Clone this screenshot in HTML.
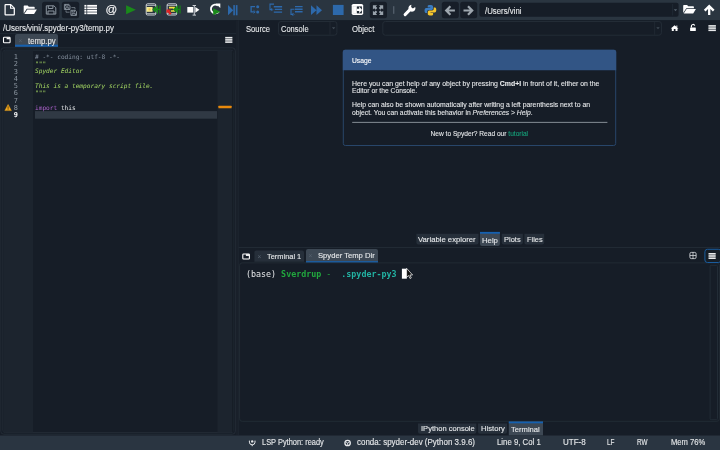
<!DOCTYPE html>
<html><head><meta charset="utf-8"><title>Spyder</title>
<style>
*{box-sizing:border-box;margin:0;padding:0}
html,body{width:720px;height:450px;overflow:hidden;background:#161d27}
body{position:relative;color:#e6e8ea}
.a{position:absolute}
.t{position:absolute;white-space:pre;line-height:1;transform-origin:0 50%}
.s{font-family:"Liberation Sans","DejaVu Sans",sans-serif;-webkit-text-stroke:0.12px}
.m{font-family:"DejaVu Sans Mono","Liberation Mono",monospace}
.cm{color:#8792a0}.ds{color:#a8dc64}.kw{color:#a960c8}
svg{position:absolute;left:0;top:0;overflow:visible}
</style></head><body>
<svg width="720" height="450" viewBox="0 0 720 450">
<rect x="0" y="0" width="720" height="20.1" fill="#2a3540"/>
<rect x="42" y="1.7" width="17.4" height="16.6" rx="2.5" fill="#171e28"/>
<rect x="61.8" y="1.7" width="17.4" height="16.6" rx="2.5" fill="#171e28"/>
<rect x="369.8" y="1.7" width="17.2" height="16.6" rx="2.5" fill="#171e28"/>
<rect x="441.8" y="1.7" width="17" height="16.6" rx="2.5" fill="#171e28"/>
<rect x="460.2" y="1.7" width="17" height="16.6" rx="2.5" fill="#171e28"/>
<rect x="479.4" y="2.8" width="199.2" height="14" rx="2" fill="#161d27"/>
<rect x="672.3" y="4" width="0.8" height="11.5" fill="#222c37"/>
<rect x="393.2" y="6.2" width="1.1" height="7.6" fill="#5b6774"/>
<rect x="235.8" y="20.1" width="2.8" height="415.2" fill="#19202a"/>
<rect x="238.2" y="20.1" width="0.8" height="415.2" fill="#1d252f"/>
<rect x="0" y="33.3" width="236" height="0.8" fill="#232d38"/>
<path d="M15 46.7V35.9q0 -2 2 -2H56q2 0 2 2V46.7z" fill="#3d4854"/>
<rect x="15" y="44.7" width="43" height="2" fill="#1560b0"/>
<rect x="0.8" y="47.8" width="234.5" height="386.4" rx="3" fill="none" stroke="#232c36" stroke-width="1"/>
<rect x="2.8" y="50.2" width="230.6" height="382.4" rx="2.5" fill="none" stroke="#232c36" stroke-width="1"/>
<rect x="3.3" y="50.7" width="29.7" height="381.4" fill="#1c242e"/>
<rect x="217.5" y="50.7" width="15.4" height="381.4" fill="#1c242e"/>
<rect x="35" y="111.1" width="182" height="7.6" fill="#303944"/>
<rect x="218.4" y="105.8" width="13.2" height="2.4" rx="0.5" fill="#e8890c"/>
<rect x="232.5" y="51" width="0.9" height="381" fill="#131921"/>
<rect x="278.5" y="21.5" width="58.4" height="13.7" rx="2.5" fill="none" stroke="#232c36" stroke-width="1"/>
<rect x="329.6" y="22" width="0.8" height="12.7" fill="#232c36"/>
<rect x="382.8" y="21.5" width="278.6" height="13.7" rx="2.5" fill="none" stroke="#232c36" stroke-width="1"/>
<rect x="654.3" y="22" width="0.8" height="12.7" fill="#232c36"/>
<rect x="343.3" y="50.3" width="272.4" height="95.2" rx="2" fill="#161d27" stroke="#28466a" stroke-width="1"/>
<path d="M342.8 70.3V51.8q0 -2 2 -2H614.2q2 0 2 2V70.3z" fill="#325585"/>
<rect x="352.2" y="121.9" width="255.2" height="0.8" fill="#a0a8b0"/>
<path d="M416.4 233.8V242.6q0 2 2 2H476.5q2 0 2 -2V233.8z" fill="#262f3a"/>
<path d="M480 231.9V243.9q0 2 2 2H497.9q2 0 2 -2V231.9z" fill="#3d4854"/>
<rect x="480" y="231.9" width="19.9" height="1.8" fill="#1560b0"/>
<path d="M501.8 233.8V242.6q0 2 2 2H520.8q2 0 2 -2V233.8z" fill="#262f3a"/>
<path d="M524.4 233.8V242.6q0 2 2 2H542.2q2 0 2 -2V233.8z" fill="#262f3a"/>
<rect x="238.6" y="247.05" width="482" height="0.9" fill="#232c36"/>
<path d="M254.4 261.7V252.5q0 -2 2 -2H302q2 0 2 2V261.7z" fill="#262f3a"/>
<path d="M306 262.8V251q0 -2 2 -2H376q2 0 2 2V262.8z" fill="#3d4854"/>
<rect x="306" y="261.2" width="72" height="1.6" fill="#1560b0"/>
<rect x="239.6" y="262.9" width="479.8" height="158.4" rx="2.5" fill="none" stroke="#232c36" stroke-width="0.9"/>
<rect x="401.9" y="268.7" width="4.9" height="10" fill="#ffffff"/>
<rect x="710.1" y="265.3" width="7.4" height="154.4" rx="1" fill="none" stroke="#222c36" stroke-width="1"/>
<path d="M418 423.5V431.7q0 2 2 2H474.3q2 0 2 -2V423.5z" fill="#262f3a"/>
<path d="M478 423.5V431.7q0 2 2 2H505q2 0 2 -2V423.5z" fill="#262f3a"/>
<rect x="508.8" y="421.5" width="34.2" height="14" fill="#3d4854"/>
<rect x="508.8" y="421.5" width="34.2" height="1.8" fill="#1560b0"/>
<rect x="0" y="435.5" width="720" height="14.5" fill="#2a3541"/>
</svg>
<div id="tx" style="position:absolute;left:0;top:0;width:720px;height:450px;will-change:transform">
<div class="t s" style="left:2.90px;top:23.95px;font-size:8.3px;transform:scaleX(0.9544);">/Users/vini/.spyder-py3/temp.py</div>
<div class="t s" style="left:18.50px;top:37.65px;font-size:6.5px;color:#56626e;-webkit-text-stroke:0">×</div>
<div class="t s" style="left:27.70px;top:36.65px;font-size:8.3px;transform:scaleX(0.9351);">temp.py</div>
<div class="t s" style="left:245.80px;top:24.85px;font-size:8.3px;transform:scaleX(0.9127);">Source</div>
<div class="t s" style="left:280.50px;top:24.85px;font-size:8.3px;transform:scaleX(0.9063);">Console</div>
<div class="t s" style="left:351.90px;top:24.85px;font-size:8.3px;transform:scaleX(0.9298);">Object</div>
<div class="t s" style="left:484.60px;top:6.65px;font-size:8.3px;transform:scaleX(0.9423);">/Users/vini</div>
<div class="t s" style="left:352.20px;top:56.65px;font-size:7.3px;transform:scaleX(0.9244);color:#fff">Usage</div>
<div class="t s" style="left:352.20px;top:80.90px;font-size:6.6px;transform:scaleX(1.0472);color:#e8eaec;-webkit-text-stroke:0.08px">Here you can get help of any object by pressing <b>Cmd+I</b> in front of it, either on the</div>
<div class="t s" style="left:352.20px;top:88.30px;font-size:6.6px;transform:scaleX(1.0222);color:#e8eaec;-webkit-text-stroke:0.08px">Editor or the Console.</div>
<div class="t s" style="left:352.20px;top:102.20px;font-size:6.6px;transform:scaleX(1.0394);color:#e8eaec;-webkit-text-stroke:0.08px">Help can also be shown automatically after writing a left parenthesis next to an</div>
<div class="t s" style="left:352.20px;top:109.60px;font-size:6.6px;transform:scaleX(1.0279);color:#e8eaec;-webkit-text-stroke:0.08px">object. You can activate this behavior in <i>Preferences &gt; Help</i>.</div>
<div class="t s" style="left:430.60px;top:130.70px;font-size:6.6px;color:#e8eaec;-webkit-text-stroke:0.08px">New to Spyder? Read our <span style="color:#16a37b">tutorial</span></div>
<div class="t s" style="left:418.40px;top:235.95px;font-size:8.1px;transform:scaleX(0.9522);">Variable explorer</div>
<div class="t s" style="left:482.00px;top:237.15px;font-size:8.1px;transform:scaleX(0.9546);">Help</div>
<div class="t s" style="left:503.80px;top:235.95px;font-size:8.1px;transform:scaleX(0.9278);">Plots</div>
<div class="t s" style="left:526.70px;top:235.95px;font-size:8.1px;transform:scaleX(0.9126);">Files</div>
<div class="t s" style="left:257.40px;top:253.85px;font-size:6.5px;color:#56626e;-webkit-text-stroke:0">×</div>
<div class="t s" style="left:267.25px;top:252.75px;font-size:8.1px;transform:scaleX(0.9172);">Terminal 1</div>
<div class="t s" style="left:308.40px;top:253.25px;font-size:6.5px;color:#56626e;-webkit-text-stroke:0">×</div>
<div class="t s" style="left:318.00px;top:252.15px;font-size:8.1px;transform:scaleX(0.9436);">Spyder Temp Dir</div>
<div class="t m" style="left:246.00px;top:269.65px;font-size:8.3px;transform:scaleX(1.0041);">(base) <b style="color:#21a83e">Sverdrup</b> <span style="color:#21a83e">-</span>  <b style="color:#22b3a3">.spyder-py3</b></div>
<div class="t s" style="left:420.50px;top:425.15px;font-size:8.1px;transform:scaleX(0.9333);">IPython console</div>
<div class="t s" style="left:480.75px;top:425.15px;font-size:8.1px;transform:scaleX(0.9429);">History</div>
<div class="t s" style="left:511.25px;top:426.35px;font-size:8.1px;transform:scaleX(0.9397);">Terminal</div>
<div class="t s" style="left:262.00px;top:439.40px;font-size:8.2px;transform:scaleX(0.9064);">LSP Python: ready</div>
<div class="t s" style="left:357.00px;top:439.40px;font-size:8.2px;transform:scaleX(0.9747);">conda: spyder-dev (Python 3.9.6)</div>
<div class="t s" style="left:497.00px;top:439.40px;font-size:8.2px;transform:scaleX(0.9514);">Line 9, Col 1</div>
<div class="t s" style="left:563.00px;top:439.40px;font-size:8.2px;transform:scaleX(0.9805);">UTF-8</div>
<div class="t s" style="left:607.00px;top:439.40px;font-size:8.2px;transform:scaleX(0.7843);">LF</div>
<div class="t s" style="left:637.00px;top:439.40px;font-size:8.2px;transform:scaleX(0.7778);">RW</div>
<div class="t s" style="left:671.25px;top:439.40px;font-size:8.2px;transform:scaleX(0.9292);">Mem 76%</div>
<div class="t s" style="left:105.61px;top:3.30px;font-size:11.6px;color:#ffffff">@</div>
<div class="t m" style="left:13.67px;top:54.15px;font-size:6.9px;color:#8c96a1">1</div>
<div class="t m" style="left:35.00px;top:53.82px;font-size:6.15px;"><span class="cm">#&nbsp;-*-&nbsp;coding:&nbsp;utf-8&nbsp;-*-</span></div>
<div class="t m" style="left:13.67px;top:61.40px;font-size:6.9px;color:#8c96a1">2</div>
<div class="t m" style="left:35.00px;top:61.08px;font-size:6.15px;"><span class="ds">"""</span></div>
<div class="t m" style="left:13.67px;top:68.65px;font-size:6.9px;color:#8c96a1">3</div>
<div class="t m" style="left:35.00px;top:68.33px;font-size:6.15px;"><span class="ds"><i>Spyder&nbsp;Editor</i></span></div>
<div class="t m" style="left:13.67px;top:75.90px;font-size:6.9px;color:#8c96a1">4</div>
<div class="t m" style="left:13.67px;top:83.15px;font-size:6.9px;color:#8c96a1">5</div>
<div class="t m" style="left:35.00px;top:82.83px;font-size:6.15px;"><span class="ds"><i>This&nbsp;is&nbsp;a&nbsp;temporary&nbsp;script&nbsp;file.</i></span></div>
<div class="t m" style="left:13.67px;top:90.40px;font-size:6.9px;color:#8c96a1">6</div>
<div class="t m" style="left:35.00px;top:90.08px;font-size:6.15px;"><span class="ds">"""</span></div>
<div class="t m" style="left:13.67px;top:97.65px;font-size:6.9px;color:#8c96a1">7</div>
<div class="t m" style="left:13.67px;top:104.90px;font-size:6.9px;color:#8c96a1">8</div>
<div class="t m" style="left:35.00px;top:104.58px;font-size:6.15px;"><span class="kw">import</span>&nbsp;this</div>
<div class="t m" style="left:13.67px;top:112.15px;font-size:6.9px;color:#ffffff;font-weight:bold">9</div>
</div>

<svg width="720" height="450" viewBox="0 0 720 450">
<!-- new file -->
<path d="M5.6 4.6h5.2l3.5 3.5v6.3q0 .5-.5.5H5.6q-.5 0-.5-.5V5.100q0-.5.5-.5z" fill="none" stroke="#fff" stroke-width="1.25" stroke-linejoin="round"/>
<path d="M10.6 4.8v3.5h3.5" fill="none" stroke="#fff" stroke-width="1.1"/>
<!-- open folder -->
<path d="M23.7 6.1q0-.7.7-.7h3.300l1.100 1.300h5.200q.7 0 .7.700v1.300h-7.900l-3.100 4.800z" fill="#fff"/>
<path d="M27.300 9.500h9.600l-2.800 4.400h-9.800z" fill="#fff"/>
<!-- save (disabled) -->
<g fill="none" stroke="#8b959f" stroke-width="1">
<path d="M46.300 5.800h7.600l1.900 1.900v6.400h-9.500z"/>
<path d="M48.300 5.800v2.700h4.600v-2.700"/>
<path d="M48 14.100v-3.100h6v3.100"/>
</g>
<!-- save all (disabled) -->
<g fill="none" stroke="#8b959f" stroke-width="0.9">
<path d="M64.400 4.400h4.300l1.300 1.300v3.800h-5.600z"/>
<path d="M65.600 4.400v1.700h2.600v-1.700M65.500 9.500v-1.700h3.400v1.700"/>
<path d="M70.900 10.300h4.300l1.300 1.300v3.800h-5.600z"/>
<path d="M72.100 10.300v1.700h2.600v-1.700M72 15.400v-1.700h3.400v1.700"/>
<path d="M66 10.400v1.800h3.600M75 9.400v-1.800h-3.600" stroke-width="0.7"/>
</g>
<!-- list -->
<g fill="#fff">
<rect x="84.400" y="4.900" width="2" height="1.800"/><rect x="87.200" y="4.900" width="9.800" height="1.800"/>
<rect x="84.400" y="7.400" width="2" height="1.800"/><rect x="87.200" y="7.400" width="9.800" height="1.800"/>
<rect x="84.400" y="9.900" width="2" height="1.800"/><rect x="87.200" y="9.900" width="9.800" height="1.800"/>
<rect x="84.400" y="12.400" width="2" height="1.800"/><rect x="87.200" y="12.400" width="9.800" height="1.800"/>
</g>
<!-- run -->
<path d="M126.100 5.300l9.700 4.500-9.700 4.500z" fill="#1a8a1a"/>
<!-- run cell -->
<rect x="146.200" y="3.800" width="9.600" height="11.200" rx="1.300" fill="none" stroke="#dfe3e6" stroke-width="0.9"/>
<path d="M146.200 5.400h9.600M146.200 13.600h9.600" stroke="#dfe3e6" stroke-width="0.700"/>
<rect x="146.500" y="7" width="6.100" height="4.800" fill="#f3ec8e"/>
<rect x="148.500" y="8.400" width="2.100" height="2.100" fill="#f0c050"/>
<path d="M152.200 9.400l4.100-3.400v6.800zM156.900 5.400h1.100v3.400h1.400v-3.400h1.100v8h-1.100v-3.400h-1.400v3.400h-1.100z" fill="#148a14"/>
<rect x="156" y="8.700" width="2" height="1.400" fill="#148a14"/>
<!-- run cell and advance -->
<rect x="167.100" y="3.800" width="9.600" height="11.200" rx="1.300" fill="none" stroke="#dfe3e6" stroke-width="0.9"/>
<path d="M167.100 5.400h9.600M167.100 13.600h9.600" stroke="#dfe3e6" stroke-width="0.700"/>
<path d="M169 7.600h5v3.400h-3.200" fill="none" stroke="#f0e040" stroke-width="1.700"/>
<path d="M166.400 9.400h4.200l-1 1.500 2 2.600-1.700 1.400-2-2.700-1.500 1.100z" fill="#e02222"/>
<path d="M172.800 9.400l4.100-3.400v6.800zM177.100 5.400h1.100v3.400h1.300v-3.400h1.100v8h-1.100v-3.400h-1.300v3.400h-1.100z" fill="#148a14"/>
<rect x="176.500" y="8.700" width="1.500" height="1.400" fill="#148a14"/>
<!-- run selection -->
<rect x="187.300" y="7" width="6" height="5.600" fill="#fff"/>
<path d="M192.600 5.500h3.400M192.600 15.100h3.400M194.300 5.500v9.600" stroke="#c9ced3" stroke-width="1"/>
<path d="M195.300 6.900l4.100 2.900-4.100 2.900z" fill="#fff"/>
<!-- re-run -->
<path d="M217.900 5.600a4.300 4.300 0 1 0 .9 5.800" fill="none" stroke="#fff" stroke-width="1.800"/>
<path d="M215.700 3.500h4.600v4.600z" fill="#fff"/>
<path d="M213.200 8.300l7.200 3.500-7.200 3.500z" fill="#1a8a1a"/>
<!-- debug -->
<g fill="#2d69ab">
<path d="M228 5.100l5.200 5.100-5.200 5.100z"/>
<rect x="233.300" y="5.100" width="1.600" height="10.200"/>
<rect x="235.800" y="5.100" width="1.700" height="10.200"/>
<!-- step -->
<circle cx="257.700" cy="6.700" r="1.500"/><circle cx="257.700" cy="12" r="1.500"/>
<!-- continue -->
<path d="M311 5.300l5.500 4.900-5.500 4.900zM316.500 5.300l5.500 4.900-5.500 4.900z"/>
<!-- stop -->
<rect x="332.900" y="4.900" width="10.700" height="10.100"/>
</g>
<g fill="none" stroke="#2d69ab" stroke-width="1.300">
<path d="M255 6.700h-3.900v5.100h3"/>
<path d="M253.600 10.300l1.600 1.500-1.600 1.500" stroke-width="1"/>
<!-- step into -->
<path d="M274 4.100h-4v5.500h2" stroke-width="1.100"/>
<path d="M271.300 8.100l1.500 1.500-1.500 1.500" stroke-width="0.900"/>
<path d="M273.800 6.700h8.300M274.800 9.400h7.300M273.800 12.100h8.300" stroke-width="1.400"/>
<!-- step out -->
<path d="M295 6.600h7.600M295 9.200h7.600M295 11.800h7.600" stroke-width="1.400"/>
<path d="M294.500 9.200h-3.500v5.200h2" stroke-width="1.100"/>
<path d="M292.500 12.900l1.500 1.500-1.500 1.500" stroke-width="0.900"/>
</g>
<!-- maximize pane -->
<rect x="351.700" y="3.900" width="11.500" height="11" rx="1.700" fill="#fff"/>
<rect x="353" y="6.300" width="3.600" height="7.200" fill="none" stroke="#d5d9dd" stroke-width="0.500"/>
<rect x="356.900" y="6.400" width="5" height="7" fill="#222c36"/>
<path d="M356.900 8.800h2.300v-2.200l2.900 3.300-2.900 3.300v-2.200h-2.300z" fill="#fff"/>
<!-- fullscreen (disabled) -->
<path d="M372.90 5.30 L377.10 5.30 L375.80 6.60 L377.30 8.10 L375.70 9.70 L374.20 8.20 L372.90 9.50z M383.20 5.30 L379.00 5.30 L380.30 6.60 L378.80 8.10 L380.40 9.70 L381.90 8.20 L383.20 9.50z M372.90 14.90 L377.10 14.90 L375.80 13.60 L377.30 12.10 L375.70 10.50 L374.20 12.00 L372.90 10.70z M383.20 14.90 L379.00 14.90 L380.30 13.60 L378.80 12.10 L380.40 10.50 L381.90 12.00 L383.20 10.70z" fill="#98a2ab"/>
<!-- wrench -->
<path d="M405.100 14.600l5.600-5.700" stroke="#fff" stroke-width="3" stroke-linecap="round" fill="none"/>
<path d="M415.200 7a3.500 3.500 0 1 1-3.800-2.200l-.3 2.500 1.800 1.100z" fill="#fff"/>
<!-- python -->
<path d="M430.200 4.900c-2.600 0-2.500 1.100-2.500 1.100v1.400h2.600v.5h-3.800s-2-.1-2 2.500 1.600 2.500 1.600 2.500h1v-1.400s0-1.600 1.600-1.600h2.800s1.500 0 1.500-1.500V6.500s.2-1.600-2.800-1.600z" fill="#3b7cc0"/>
<path d="M430.600 15.600c2.600 0 2.500-1.100 2.500-1.100v-1.400h-2.600v-.5h3.800s2 .1 2-2.500-1.600-2.500-1.600-2.500h-1v1.400s0 1.600-1.600 1.600h-2.800s-1.500 0-1.500 1.500v1.900s-.2 1.600 2.800 1.600z" fill="#f5c52c"/>
<!-- back / forward -->
<g fill="none" stroke="#9fa8b0" stroke-width="2.200" stroke-linejoin="miter">
<path d="M454.900 10.500h-8M450.400 6.300l-4.200 4.200 4.200 4.200"/>
<path d="M463.500 10.500h8M468 6.300l4.200 4.200-4.200 4.200"/>
</g>
<!-- combo arrows -->
<path d="M673.800 9.300h3.400l-1.700 1.900z" fill="#55616d"/>
<path d="M331.900 27.300h3.400l-1.700 1.900z" fill="#414b56"/>
<path d="M656.300 27.300h3.400l-1.700 1.900z" fill="#414b56"/>
<!-- folder open right -->
<path d="M683.200 5.700q0-.7.700-.7h3.200l1.100 1.300h5q.7 0 .7.700v1.300h-7.600l-3.100 4.800z" fill="#fff"/>
<path d="M686.600 9.100h9.300l-2.700 4.400h-9.500z" fill="#fff"/>
<!-- up arrow -->
<path d="M709.200 14.900v-7.500M704.700 10.600l4.500-4.500 4.500 4.500" fill="none" stroke="#fff" stroke-width="2.300" stroke-linejoin="miter"/>
<!-- editor: browse tabs icon -->
<rect x="3.500" y="37.300" width="6.600" height="5.400" rx="0.800" fill="none" stroke="#fff" stroke-width="1.100"/>
<path d="M6.600 37.500h3.300v1.800h-3.300z" fill="#fff"/>
<!-- editor hamburger -->
<g fill="#e8eaec">
<rect x="225.200" y="36.900" width="7.200" height="1.600"/><rect x="225.200" y="39.100" width="7.200" height="1.600"/><rect x="225.200" y="41.300" width="7.200" height="1.600"/>
<!-- help hamburger -->
<rect x="708.400" y="25.100" width="7.500" height="1.600"/><rect x="708.400" y="27.300" width="7.500" height="1.600"/><rect x="708.400" y="29.500" width="7.500" height="1.600"/>
</g>
<!-- home -->
<path d="M674.600 25.200l3.900 3.300h-1v2.400h-2v-1.800h-1.700v1.800h-2v-2.400h-1z" fill="#fff"/>
<rect x="676.400" y="25.500" width="0.900" height="1.600" fill="#fff"/>
<!-- lock open -->
<rect x="690.100" y="27.400" width="5.700" height="3.500" rx="0.500" fill="#fff"/>
<path d="M691.400 27.600v-1.500a1.700 1.700 0 0 1 3.300-.5" fill="none" stroke="#fff" stroke-width="1.200"/>
<!-- warning icon line 8 -->
<path d="M8.100 104.400l3.300 6.200h-6.600z" fill="#f2a81e" stroke="#f2a81e" stroke-width="0.4" stroke-linejoin="round"/>
<path d="M8.100 106.300v2.500M8.100 109.400v.7" stroke="#5a3a00" stroke-width="0.900"/>
<!-- terminal pane icons -->
<rect x="242.800" y="254" width="6.600" height="5" rx="0.800" fill="none" stroke="#fff" stroke-width="1.100"/>
<path d="M245.900 254.200h3.300v1.700h-3.300z" fill="#fff"/>
<rect x="689.900" y="252.400" width="6.200" height="6.200" rx="1.400" fill="none" stroke="#d0d4d8" stroke-width="0.900"/>
<path d="M693 252.400v6.200M689.900 255.500h6.200" stroke="#d0d4d8" stroke-width="0.800"/>
<rect x="704.900" y="249.300" width="16" height="13.200" rx="2.500" fill="#161e27" stroke="#1a5c9e" stroke-width="1"/>
<g fill="#e8eaec"><rect x="708.500" y="253" width="7.200" height="1.600"/><rect x="708.500" y="255.200" width="7.200" height="1.600"/><rect x="708.500" y="257.400" width="7.200" height="1.600"/></g>
<!-- mouse pointer -->
<path d="M406.600 268.300v9l2-1.800 1.400 3 1.300-.6-1.400-2.900h2.700z" fill="#111" stroke="#fff" stroke-width="0.700" stroke-linejoin="round"/>
<!-- status icons -->
<circle cx="252.200" cy="441.400" r="1.200" fill="#e8eaec"/>
<path d="M249.400 440.600v1.600q0 2.600 2.800 2.600t2.800-2.600v-1.600" fill="none" stroke="#e8eaec" stroke-width="1"/>
<path d="M252.200 444.800v1.400" stroke="#e8eaec" stroke-width="1"/>
<circle cx="347.600" cy="443" r="2.700" fill="none" stroke="#e8eaec" stroke-width="1.300"/>
<path d="M347.600 443v2.700M347.600 443l-2.300-1.400M347.600 443l2.300-1.400" stroke="#e8eaec" stroke-width="0.800"/>

</svg>
</body></html>
